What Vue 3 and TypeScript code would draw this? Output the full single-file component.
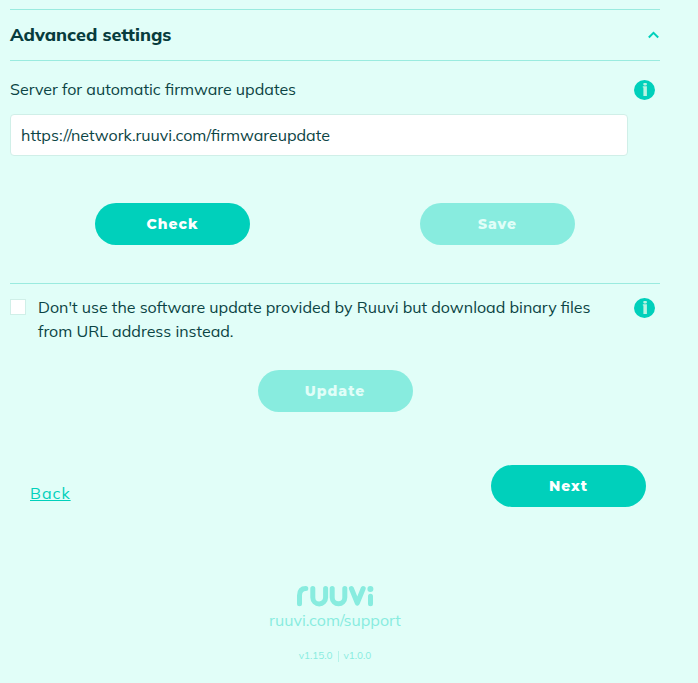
<script setup lang="ts">
import { ref } from 'vue'

const expanded = ref(true)
const serverUrl = ref('https://network.ruuvi.com/firmwareupdate')
const useCustomUrl = ref(false)
</script>

<template>
  <main class="page">
    <h2 class="heading">
      <button type="button" class="toggle" :aria-expanded="expanded" @click="expanded = !expanded">
        <span>Advanced settings</span>
        <svg class="chevron" :class="{ closed: !expanded }" width="12" height="8" viewBox="0 0 12 8" aria-hidden="true">
          <path d="M.8 6.5 5.5 1.9l4.7 4.6" />
        </svg>
      </button>
    </h2>

    <div v-show="expanded">
      <section class="server">
        <div class="row">
          <label for="server-url">Server for automatic firmware updates</label>
          <button type="button" class="info" aria-label="Info">
            <svg width="21" height="20" viewBox="0 0 21 20" aria-hidden="true">
              <ellipse class="disc" cx="10.5" cy="10" rx="10.5" ry="10" />
              <rect x="9.3" y="3" width="3.6" height="2.4" rx="0.8" />
              <path d="M8.8 6.3h4.1V16H9.4V7.6h-.6z" />
            </svg>
          </button>
        </div>
        <input id="server-url" v-model="serverUrl" class="url" type="text" />
        <div class="actions">
          <button type="button" class="btn">Check</button>
          <button type="button" class="btn" disabled>Save</button>
        </div>
      </section>

      <section class="custom">
        <div class="row">
          <label class="option" for="custom-url">
            <input id="custom-url" v-model="useCustomUrl" type="checkbox" />
            <span>Don't use the software update provided by Ruuvi but download binary files from URL address instead.</span>
          </label>
          <button type="button" class="info" aria-label="Info">
            <svg width="21" height="20" viewBox="0 0 21 20" aria-hidden="true">
              <ellipse class="disc" cx="10.5" cy="10" rx="10.5" ry="10" />
              <rect x="9.3" y="3" width="3.6" height="2.4" rx="0.8" />
              <path d="M8.8 6.3h4.1V16H9.4V7.6h-.6z" />
            </svg>
          </button>
        </div>
        <div class="actions update">
          <button type="button" class="btn" disabled>Update</button>
        </div>
      </section>
    </div>

    <nav class="nav">
      <a class="back" href="#back">Back</a>
      <button type="button" class="btn">Next</button>
    </nav>

    <footer class="footer">
      <svg class="logo" width="78" height="22" viewBox="0 0 78 22" role="img" aria-label="Ruuvi">
        <path d="M3.5 18.8V10.6Q3.5 3.5 9.8 3.5M16.8 3.5v9a6.4 6.4 0 0 0 12.8 0v-9M36.2 3.5v9a6.3 6.3 0 0 0 12.6 0v-9M55.4 3.5l5.9 14.6 5.9-14.6M74.5 11.3v7.5" />
        <circle cx="74.4" cy="4" r="3" />
      </svg>
      <a class="support" href="#support">ruuvi.com/support</a>
      <p class="versions"><span>v1.15.0</span><span class="bar"></span><span>v1.0.0</span></p>
    </footer>
  </main>
</template>

<style>
body {
  background: #e1fef8;
}
</style>

<style scoped>
.page {
  padding: 9px 38px 16px 10px;
  color: #0b4444;
  font-family: Muli, Mulish, "Open Sans", sans-serif;
  font-size: 16px;
  line-height: 24px;
}

.page * {
  box-sizing: border-box;
}

.heading {
  margin: 0;
  border: solid #9aebdf;
  border-width: 1px 0;
}

.toggle {
  display: flex;
  align-items: center;
  justify-content: space-between;
  width: 100%;
  height: 50px;
  padding: 0;
  border: 0;
  background: none;
  color: #083c3d;
  font: inherit;
  font-size: 18px;
  font-weight: 800;
  cursor: pointer;
}

.chevron {
  fill: none;
  stroke: #00d0bb;
  stroke-width: 2;
}

.chevron.closed {
  transform: rotate(180deg);
}

.server {
  padding: 16px 0 38px;
}

.row {
  display: flex;
  align-items: flex-start;
  justify-content: space-between;
  padding-right: 5px;
}

.info {
  display: flex;
  flex: none;
  margin-top: 3px;
  padding: 0;
  border: 0;
  background: none;
  fill: #b9f3e2;
  cursor: pointer;
}

.disc {
  fill: #00d0bb;
}

.url {
  display: block;
  width: calc(100% - 32px);
  height: 42px;
  margin-top: 13px;
  padding: 0 10px;
  border: 1px solid #d0efe8;
  border-radius: 4px;
  background: #fff;
  color: inherit;
  font: inherit;
}

.actions {
  display: grid;
  grid-auto-flow: column;
  grid-auto-columns: 1fr;
  justify-items: center;
  margin-top: 47px;
}

.btn {
  width: 155px;
  height: 42px;
  padding: 0;
  border: 0;
  border-radius: 21px;
  background: #00d0bb;
  color: #fff;
  font-family: Montserrat, "Open Sans", sans-serif;
  font-size: 14px;
  font-weight: 800;
  letter-spacing: 1px;
  cursor: pointer;
}

.btn:disabled {
  background: #88ecdf;
  color: #e1fef8;
  cursor: default;
}

.custom {
  padding-top: 11px;
  border-top: 1px solid #9aebdf;
}

.option {
  display: flex;
  gap: 12px;
  max-width: 600px;
}

.option input {
  flex: none;
  appearance: none;
  width: 16px;
  height: 16px;
  margin: 4px 0 0;
  border: 1px solid #d0efe8;
  background: #fff;
}

.option input:checked {
  background: #00d0bb;
}

.update {
  margin-top: 27px;
}

.nav {
  display: flex;
  align-items: flex-start;
  justify-content: space-between;
  margin-top: 53px;
  padding: 0 14px 0 20px;
}

.back {
  margin-top: 16px;
  color: #00d0bb;
  letter-spacing: 1px;
}

.footer {
  display: flex;
  flex-direction: column;
  align-items: center;
  margin-top: 78px;
  color: #88ecdf;
}

.logo {
  fill: none;
  stroke: #88ecdf;
  stroke-width: 5;
  stroke-linecap: round;
  stroke-linejoin: round;
}

.logo circle {
  fill: #88ecdf;
  stroke: none;
}

.support {
  margin-top: 1px;
  color: inherit;
  text-decoration: none;
}

.versions {
  display: flex;
  align-items: center;
  gap: 5px;
  margin: 12px 0 0;
  font-size: 10px;
}

.bar {
  width: 1px;
  height: 11px;
  background: #b5f4ea;
}
</style>
